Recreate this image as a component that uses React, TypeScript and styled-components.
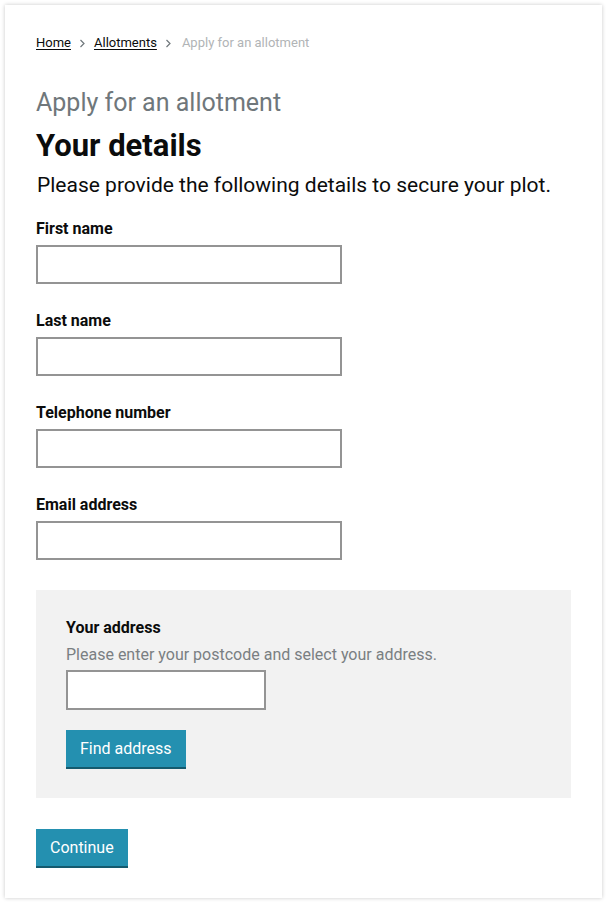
import React from 'react';
import styled, { createGlobalStyle } from 'styled-components';

const GlobalStyle = createGlobalStyle`
  html, body {
    margin: 0;
    padding: 0;
    background: #ffffff;
  }
  body {
    font-family: Roboto, "Liberation Sans", Arial, sans-serif;
    color: #0b0c0c;
  }
  * {
    box-sizing: border-box;
  }
`;

const Page = styled.div`
  padding: 5px 6px 6px 5px;
`;

const Card = styled.main`
  display: flex;
  flex-direction: column;
  align-items: flex-start;
  background: #fff;
  box-shadow: 0 0 4px rgba(0, 0, 0, 0.22);
  padding: 28px 31px 30px 31px;
`;

const Breadcrumbs = styled.nav`
  display: flex;
  align-items: center;
  gap: 8px;
  font-size: 13px;
  line-height: 20px;
`;

const Crumb = styled.a`
  color: #0b0c0c;
  text-decoration: underline;
  text-underline-offset: 2px;
`;

const CurrentCrumb = styled.span`
  margin-left: 2px;
  color: #b1b4b6;
`;

const Chevron = styled.svg`
  width: 7px;
  height: 9px;
  margin-top: 1px;
`;

const Caption = styled.span`
  display: block;
  margin-top: 35px;
  font-size: 25px;
  line-height: 30px;
  color: #6f777b;
`;

const Title = styled.h1`
  margin: 10px 0 0;
  font-size: 31px;
  line-height: 36px;
  font-weight: 700;
`;

const Lead = styled.p`
  margin: 8px 0 0 1px;
  font-size: 21px;
  line-height: 26px;
`;

const Field = styled.div<{ $first?: boolean }>`
  display: flex;
  flex-direction: column;
  margin-top: ${({ $first }) => ($first ? '20px' : '26px')};
`;

const Label = styled.label`
  padding-top: 1px;
  font-size: 16px;
  line-height: 20px;
  font-weight: 700;
`;

const Input = styled.input<{ $width: number; $height: number; $gap: number }>`
  margin-top: ${({ $gap }) => $gap}px;
  width: ${({ $width }) => $width}px;
  height: ${({ $height }) => $height}px;
  border: 2px solid #949494;
  border-radius: 0;
  background: #fff;
  font: inherit;
  padding: 0 8px;
`;

const Panel = styled.section`
  align-self: stretch;
  margin: 30px 0 0;
  background: #f2f2f2;
  padding: 27px 30px 29px;
  display: flex;
  flex-direction: column;
  align-items: flex-start;
`;

const Hint = styled.span`
  margin-top: 7px;
  font-size: 16px;
  line-height: 20px;
  color: #7a7f82;
`;

const Button = styled.button<{ $gap: number }>`
  margin-top: ${({ $gap }) => $gap}px;
  height: 39px;
  padding: 0 14px;
  border: 0;
  border-bottom: 2px solid #145a6e;
  border-radius: 0;
  background: #2490b0;
  color: #fff;
  font-family: Roboto, "Liberation Sans", Arial, sans-serif;
  font-size: 16px;
  line-height: 37px;
  cursor: pointer;
`;

const fields = ['First name', 'Last name', 'Telephone number', 'Email address'];

const ChevronIcon = () => (
  <Chevron viewBox="0 0 7 9">
    <path d="M1.5 1l3.5 3.5L1.5 8" fill="none" stroke="#6f777b" strokeWidth="1.2" />
  </Chevron>
);

export default function App() {
  return (
    <>
      <GlobalStyle />
      <Page>
        <Card>
          <Breadcrumbs>
            <Crumb href="#">Home</Crumb>
            <ChevronIcon />
            <Crumb href="#">Allotments</Crumb>
            <ChevronIcon />
            <CurrentCrumb>Apply for an allotment</CurrentCrumb>
          </Breadcrumbs>

          <Caption>Apply for an allotment</Caption>
          <Title>Your details</Title>
          <Lead>Please provide the following details to secure your plot.</Lead>

          {fields.map((name, i) => (
            <Field key={name} $first={i === 0}>
              <Label>{name}</Label>
              <Input $width={306} $height={39} $gap={6} />
            </Field>
          ))}

          <Panel>
            <Label>Your address</Label>
            <Hint>Please enter your postcode and select your address.</Hint>
            <Input $width={200} $height={40} $gap={5} />
            <Button $gap={20}>Find address</Button>
          </Panel>

          <Button $gap={31}>Continue</Button>
        </Card>
      </Page>
    </>
  );
}
